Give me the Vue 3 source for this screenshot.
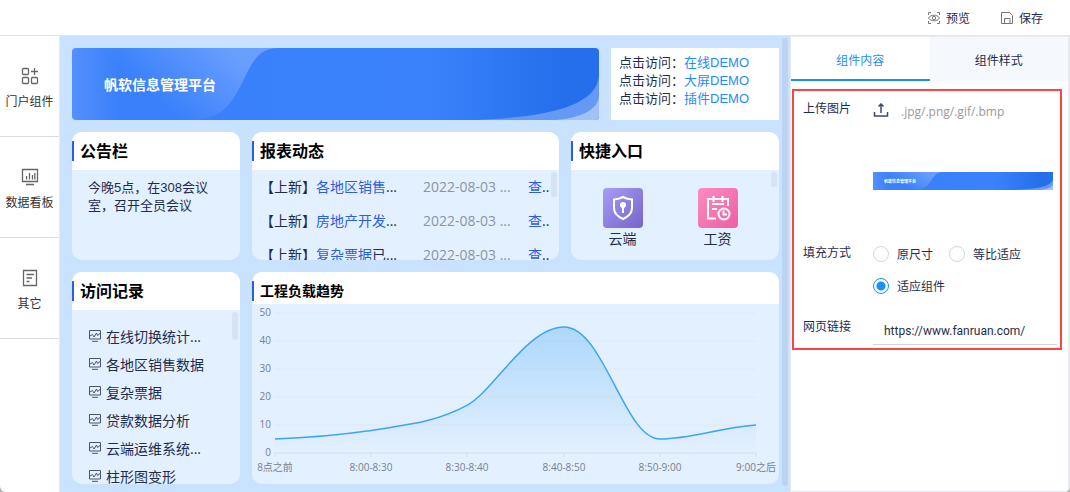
<template>
  <div class="designer">
    <svg class="symbols" aria-hidden="true">
      <defs>
        <linearGradient id="bn-base" x1="0" y1="0" x2="1" y2="0">
          <stop offset="0" stop-color="#5590fd" />
          <stop offset="0.09" stop-color="#3980fa" />
          <stop offset="0.68" stop-color="#3a82fc" />
          <stop offset="0.93" stop-color="#256fec" />
        </linearGradient>
        <linearGradient id="bn-fold" x1="0" y1="1" x2="1" y2="0.6">
          <stop offset="0.45" stop-color="#6fa2ff" stop-opacity="0" />
          <stop offset="1" stop-color="#6fa2ff" stop-opacity="0.9" />
        </linearGradient>
      </defs>
      <symbol id="banner-art" viewBox="0 0 527 72" preserveAspectRatio="none">
        <rect width="527" height="72" fill="url(#bn-base)" />
        <path d="M0 0H207C183 0 178 20 168 39C158 58 148 72 118 72H0Z" fill="url(#bn-fold)" />
        <path d="M405 72C470 69 524 60 527 28V72Z" fill="#6699f3" />
        <path d="M484 72C508 70 526 62 527 48V72Z" fill="#a3c1f8" />
      </symbol>
    </svg>

    <header class="topbar">
      <button type="button" class="tool">
        <svg width="14" height="14" viewBox="0 0 14 14">
          <path d="M1.5 4V1.500H4M10 1.500H12.500V4M12.500 10V12.500H10M4 12.500H1.500V10" />
          <path d="M1.500 7C4 3.300 10 3.300 12.500 7C10 10.700 4 10.700 1.500 7Z" />
          <circle cx="7" cy="7" r="1.700" />
        </svg>
        预览
      </button>
      <button type="button" class="tool">
        <svg width="14" height="14" viewBox="0 0 14 14">
          <path d="M1.500 1.500H9.500L12.500 4.500V12.500H1.500ZM4.500 12.500V7.500H10V12.500" />
        </svg>
        保存
      </button>
    </header>

    <div class="workspace">
      <nav class="sidebar">
        <button type="button" class="side-item">
          <svg width="18" height="18" viewBox="0 0 18 18">
            <rect x="1.500" y="1.500" width="6" height="6" rx="1" />
            <rect x="1.500" y="10.500" width="6" height="6" rx="1" />
            <rect x="10.500" y="10.500" width="6" height="6" rx="1" />
            <path d="M13.500 1V8M10 4.500H17" />
          </svg>
          门户组件
        </button>
        <button type="button" class="side-item">
          <svg width="18" height="18" viewBox="0 0 18 18">
            <path d="M1.500 1.500H16.500V13.500H1.500ZM5 16.500H13M5.500 8V11.500M8.500 5V11.500M11.500 7V11.500M13.800 5V11.500" />
          </svg>
          数据看板
        </button>
        <button type="button" class="side-item">
          <svg width="18" height="18" viewBox="0 0 18 18">
            <path d="M2.500 1.500H15.500V16.500H2.500ZM5.500 5.500H13M5.500 9H11M5.500 12.500H8.500" />
          </svg>
          其它
        </button>
      </nav>

      <main class="canvas">
        <div class="row">
          <div class="banner">
            <svg class="art"><use href="#banner-art" /></svg>
            <span class="banner-title">帆软信息管理平台</span>
          </div>
          <div class="demos narrow">
            <div v-for="d in demos" :key="d">点击访问：<a href="#">{{ d }}</a></div>
          </div>
        </div>

        <div class="row">
          <section class="card mid narrow">
            <h2>公告栏</h2>
            <p class="notice">今晚5点，在308会议室，召开全员会议</p>
          </section>
          <section class="card mid grow">
            <h2>报表动态</h2>
            <div class="card-body">
              <div v-for="r in reports" :key="r.name" class="report">
                <span class="report-name">【上新】<a href="#">{{ r.name }}</a>{{ r.tail }}</span>
                <span class="report-date">2022-08-03 ...</span>
                <span class="report-view"><a href="#">查</a>..</span>
              </div>
              <i class="thumb tall"></i>
            </div>
          </section>
          <section class="card mid quick">
            <h2>快捷入口</h2>
            <div class="card-body entries">
              <a href="#" class="entry">
                <span class="tile purple">
                  <svg width="40" height="40" viewBox="0 0 40 40">
                    <path d="M20 9C23 10.600 26 11.300 29 11.500V20C29 25 25.500 28.500 20 31C14.500 28.500 11 25 11 20V11.500C14 11.300 17 10.600 20 9Z" />
                    <circle cx="20" cy="17" r="2" fill="#fff" />
                    <path d="M20 18V25" />
                  </svg>
                </span>
                云端
              </a>
              <a href="#" class="entry">
                <span class="tile pink">
                  <svg width="40" height="40" viewBox="0 0 40 40">
                    <path d="M18 30.500H10V11H30V18M15.500 8V14M24.500 8V14M14 16H26M14 21H19" />
                    <circle cx="26" cy="26" r="5.500" />
                    <path d="M25.500 22.500V26.500H29" />
                  </svg>
                </span>
                工资
              </a>
              <i class="thumb short"></i>
            </div>
          </section>
        </div>

        <div class="row">
          <section class="card tall-card narrow">
            <h2>访问记录</h2>
            <div class="card-body visits">
              <a v-for="v in visits" :key="v" href="#" class="visit">
                <svg width="12" height="12" viewBox="0 0 12 12">
                  <path d="M0.500 0.500H11.500V9H0.500ZM3 11.300H9M1 6L3.500 4.500L5 7L7.500 3L8.500 5.500L11 3.500" />
                </svg>
                {{ v }}
              </a>
              <i class="thumb"></i>
            </div>
          </section>
          <section class="card tall-card grow">
            <h2 class="compact">工程负载趋势</h2>
            <svg class="chart" viewBox="0 0 527 180">
              <defs>
                <linearGradient id="area" x1="0" y1="0" x2="0" y2="1">
                  <stop offset="0" stop-color="#3ba5f5" stop-opacity="0.32" />
                  <stop offset="1" stop-color="#3ba5f5" stop-opacity="0" />
                </linearGradient>
              </defs>
              <g v-for="t in yTicks" :key="t">
                <line x1="23" x2="504" :y1="yOf(t)" :y2="yOf(t)" :class="t ? 'grid' : 'axis'" />
                <text x="19" :y="yOf(t) + 3" text-anchor="end">{{ t }}</text>
              </g>
              <g v-for="(p, i) in points" :key="p.label">
                <line :x1="xOf(i)" :x2="xOf(i)" y1="149" y2="153" class="axis" />
                <text :x="xOf(i)" y="167" text-anchor="middle">{{ p.label }}</text>
              </g>
              <path :d="curve + 'V149H23Z'" fill="url(#area)" />
              <path :d="curve" class="line" />
            </svg>
          </section>
        </div>
        <i class="canvas-thumb"></i>
      </main>

      <aside class="panel">
        <div class="tabs" role="tablist">
          <button
            v-for="t in tabs"
            :key="t"
            type="button"
            role="tab"
            class="tab"
            :class="{ active: t === tab }"
            :aria-selected="t === tab"
            @click="tab = t"
          >{{ t }}</button>
        </div>

        <form class="props" @submit.prevent>
          <div class="field upload-field">
            <span class="label">上传图片</span>
            <div class="control">
              <button type="button" class="upload">
                <svg width="16" height="16" viewBox="0 0 16 16">
                  <path d="M1.500 9V13H14.500V9M8 10V1.500M5.500 3.500L8 1L10.500 3.500" />
                </svg>
                .jpg/.png/.gif/.bmp
              </button>
              <div class="preview">
                <div class="mini">
                  <svg class="art"><use href="#banner-art" /></svg>
                  <span class="mini-title">帆软信息管理平台</span>
                </div>
              </div>
            </div>
          </div>
          <div class="field">
            <span id="fill-label" class="label">填充方式</span>
            <div class="control radios" role="radiogroup" aria-labelledby="fill-label">
              <label v-for="f in fills" :key="f">
                <input v-model="fill" type="radio" name="fill" :value="f" />{{ f }}
              </label>
            </div>
          </div>
          <div class="field link-field">
            <label class="label" for="link">网页链接</label>
            <input id="link" v-model="link" class="link-input" type="text" />
          </div>
        </form>
      </aside>
    </div>
  </div>
</template>

<script setup>
import { ref } from 'vue'

const tabs = ['组件内容', '组件样式']
const tab = ref('组件内容')

const fills = ['原尺寸', '等比适应', '适应组件']
const fill = ref('适应组件')
const link = ref('https://www.fanruan.com/')

const demos = ['在线DEMO', '大屏DEMO', '插件DEMO']

const reports = [
  { name: '各地区销售', tail: '...' },
  { name: '房地产开发', tail: '...' },
  { name: '复杂票据', tail: '已...' },
]

const visits = [
  '在线切换统计...',
  '各地区销售数据',
  '复杂票据',
  '贷款数据分析',
  '云端运维系统...',
  '柱形图变形',
]

const yTicks = [50, 40, 30, 20, 10, 0]
const points = [
  { label: '8点之前', value: 5 },
  { label: '8:00-8:30', value: 8 },
  { label: '8:30-8:40', value: 17 },
  { label: '8:40-8:50', value: 45 },
  { label: '8:50-9:00', value: 5 },
  { label: '9:00之后', value: 10 },
]

const xOf = (i) => 23 + Math.round(i * 96.2)
const yOf = (v) => 149 - v * 2.8

// control points of the smoothed line, two per segment
const handles = [
  [55, 134, 88, 131],
  [150, 121, 180, 120],
  [241, 88, 275, 23],
  [352, 23, 372, 135],
  [440, 135, 465, 124],
]
const curve = points.slice(1).reduce(
  (d, p, i) => `${d}C${handles[i].join(' ')} ${xOf(i + 1)} ${yOf(p.value)}`,
  `M${xOf(0)} ${yOf(points[0].value)}`
)
</script>

<style>
body {
  margin: 0;
  background: #b4b4b4;
}
</style>

<style scoped>
.designer {
  display: flex;
  flex-direction: column;
  min-height: 100vh;
  background: #fff;
  border-radius: 0 0 6px 6px;
  overflow: hidden;
  color: #1f2d4d;
  font-family: "Open Sans", "Noto Sans CJK SC", sans-serif;
  font-size: 12px;
}
.designer *,
.designer *::before {
  box-sizing: border-box;
}
button,
input {
  font: inherit;
  color: inherit;
  border: none;
  background: none;
  padding: 0;
  margin: 0;
}
button { cursor: pointer; }
a {
  color: inherit;
  text-decoration: none;
}
svg {
  fill: none;
  flex: none;
}
.symbols {
  position: absolute;
  width: 0;
  height: 0;
}

.topbar {
  display: flex;
  justify-content: flex-end;
  gap: 30px;
  height: 36px;
  padding-right: 27px;
  border-bottom: 1px solid #e3e5e8;
}
.tool {
  display: flex;
  align-items: center;
  gap: 5px;
}
.tool svg { stroke: #777; }

.workspace {
  flex: 1;
  display: flex;
}
.sidebar {
  width: 60px;
  border-right: 1px solid #e8eaee;
}
.side-item {
  display: flex;
  flex-direction: column;
  align-items: center;
  gap: 9px;
  width: 100%;
  height: 101px;
  padding-top: 31px;
  border-bottom: 1px solid #dcdcdc;
  color: #333;
  line-height: 16px;
}
.side-item svg {
  stroke: #666;
  stroke-width: 1.3;
}

.canvas {
  position: relative;
  flex: 1;
  min-width: 0;
  display: flex;
  flex-direction: column;
  gap: 12px;
  padding: 12px 11px 8px 12px;
  background: #c9e2ff;
}
.canvas-thumb {
  position: absolute;
  top: 2px;
  right: 2px;
  bottom: 6px;
  width: 6px;
  border-radius: 3px;
  background: #bcd4f1;
}
.row {
  display: flex;
  gap: 12px;
}
.narrow { width: 168px; }
.grow {
  flex: 1;
  min-width: 0;
}
.quick { width: 208px; }

.banner {
  position: relative;
  flex: 1;
  display: flex;
  align-items: center;
  height: 72px;
  padding-left: 32px;
  border-radius: 4px;
  overflow: hidden;
}
.art {
  position: absolute;
  inset: 0;
  width: 100%;
  height: 100%;
}
.banner-title {
  position: relative;
  color: #fff;
  font-size: 14px;
  font-weight: 700;
}
.demos {
  padding: 6px 8px;
  background: #fff;
  font-family: "Liberation Sans", "Noto Sans CJK SC", sans-serif;
  font-size: 13px;
  line-height: 18px;
}
.demos a { color: #1e8cff; }

.card {
  display: flex;
  flex-direction: column;
  background: #e3f0ff;
  border-radius: 10px;
  overflow: hidden;
}
.mid { height: 128px; }
.tall-card { min-height: 212px; }
h2 {
  display: flex;
  gap: 6px;
  margin: 0;
  padding: 9px 0;
  background: #fff;
  color: #000;
  font-size: 16px;
  line-height: 20px;
  font-weight: 700;
}
h2::before {
  content: "";
  width: 2px;
  height: 20px;
  background: #2c5fe0;
}
.compact {
  padding-bottom: 3px;
  font-size: 14px;
}
.card-body {
  position: relative;
  flex: 1;
}
.thumb {
  position: absolute;
  top: 2px;
  right: 2px;
  width: 6px;
  height: 28px;
  border-radius: 3px;
  background: #d6e3f3;
}
.thumb.tall { height: 25px; }
.thumb.short { height: 15px; }

.notice {
  margin: 0;
  padding: 9px 16px;
  font-family: "Liberation Sans", "Noto Sans CJK SC", sans-serif;
  font-size: 13px;
  line-height: 18px;
}
.report {
  display: flex;
  padding-left: 8px;
  font-size: 14px;
  line-height: 34px;
  white-space: nowrap;
}
.report a { color: #2c5fe0; }
.report-name {
  flex: 1;
}
.report-date {
  width: 105px;
  color: #8b94a3;
}
.report-view { width: 31px; }

.entries {
  display: flex;
  padding: 18px 14px 0 4px;
}
.entry {
  flex: 1;
  display: flex;
  flex-direction: column;
  align-items: center;
  gap: 1px;
  font-size: 14px;
  line-height: 20px;
}
.tile {
  width: 40px;
  height: 40px;
  border-radius: 4px;
}
.tile svg {
  display: block;
  stroke: #fff;
  stroke-width: 2;
}
.purple { background: linear-gradient(135deg, #a79bf8, #7565c8); }
.pink { background: linear-gradient(135deg, #fb8cc0, #ee5fa5); }

.visits {
  padding: 12px 0 0 17px;
  height: 174px;
  flex: none;
}
.visit {
  display: flex;
  align-items: center;
  gap: 5px;
  height: 28px;
  font-size: 14px;
  white-space: nowrap;
}
.visit svg { stroke: #4a5470; }

.chart {
  display: block;
  width: 100%;
  height: auto;
}
.chart text {
  fill: #77808c;
  font-size: 10px;
}
.grid { stroke: #e2e8f0; }
.axis { stroke: #d5dde8; }
.line {
  stroke: #3ba5f5;
  stroke-width: 1.5;
}

.panel {
  width: 280px;
  border: 1px solid #e8ebf0;
  border-right-width: 2px;
}
.tabs {
  display: flex;
}
.tab {
  flex: 1;
  height: 44px;
  padding-top: 2px;
  background: #f5f9fd;
}
.tab.active {
  padding-top: 4px;
  border-bottom: 2px solid #1890ff;
  background: #fff;
  color: #1890ff;
}
.props {
  display: flex;
  flex-direction: column;
  margin: 8px 6px 0 1px;
  padding: 8px 3px 3px 9px;
  border: 2px solid #fa4545;
}
.field {
  display: flex;
  margin-bottom: 20px;
}
.field.upload-field { margin-bottom: 4px; }
.field.link-field { margin-bottom: 0; }
.label {
  width: 70px;
  line-height: 20px;
}
.control {
  flex: 1;
  min-width: 0;
}
.upload {
  display: flex;
  align-items: center;
  gap: 12px;
  height: 24px;
  color: #999;
}
.upload svg {
  stroke: #3c4866;
  stroke-width: 1.5;
}
.preview {
  display: flex;
  align-items: center;
  height: 116px;
}
.mini {
  position: relative;
  display: flex;
  align-items: center;
  width: 180px;
  height: 18px;
  padding-left: 11px;
}
.mini-title {
  position: relative;
  color: #fff;
  font-size: 4px;
  font-weight: 700;
}
.radios {
  display: flex;
  flex-wrap: wrap;
  gap: 10px 16px;
}
.radios label {
  display: flex;
  align-items: center;
  gap: 8px;
  height: 22px;
}
.radios input {
  appearance: none;
  width: 16px;
  height: 16px;
  border: 1px solid #d4d6da;
  border-radius: 50%;
  background: #fff;
}
.radios input:checked {
  border-color: #1890ff;
  background: radial-gradient(circle, #1890ff 4px, #fff 5px);
}
.link-input {
  flex: 1;
  min-width: 0;
  height: 28px;
  padding-left: 11px;
  border-bottom: 1px solid #d4d6da;
  outline: none;
  font-family: Roboto, "Noto Sans CJK SC", sans-serif;
}
</style>
